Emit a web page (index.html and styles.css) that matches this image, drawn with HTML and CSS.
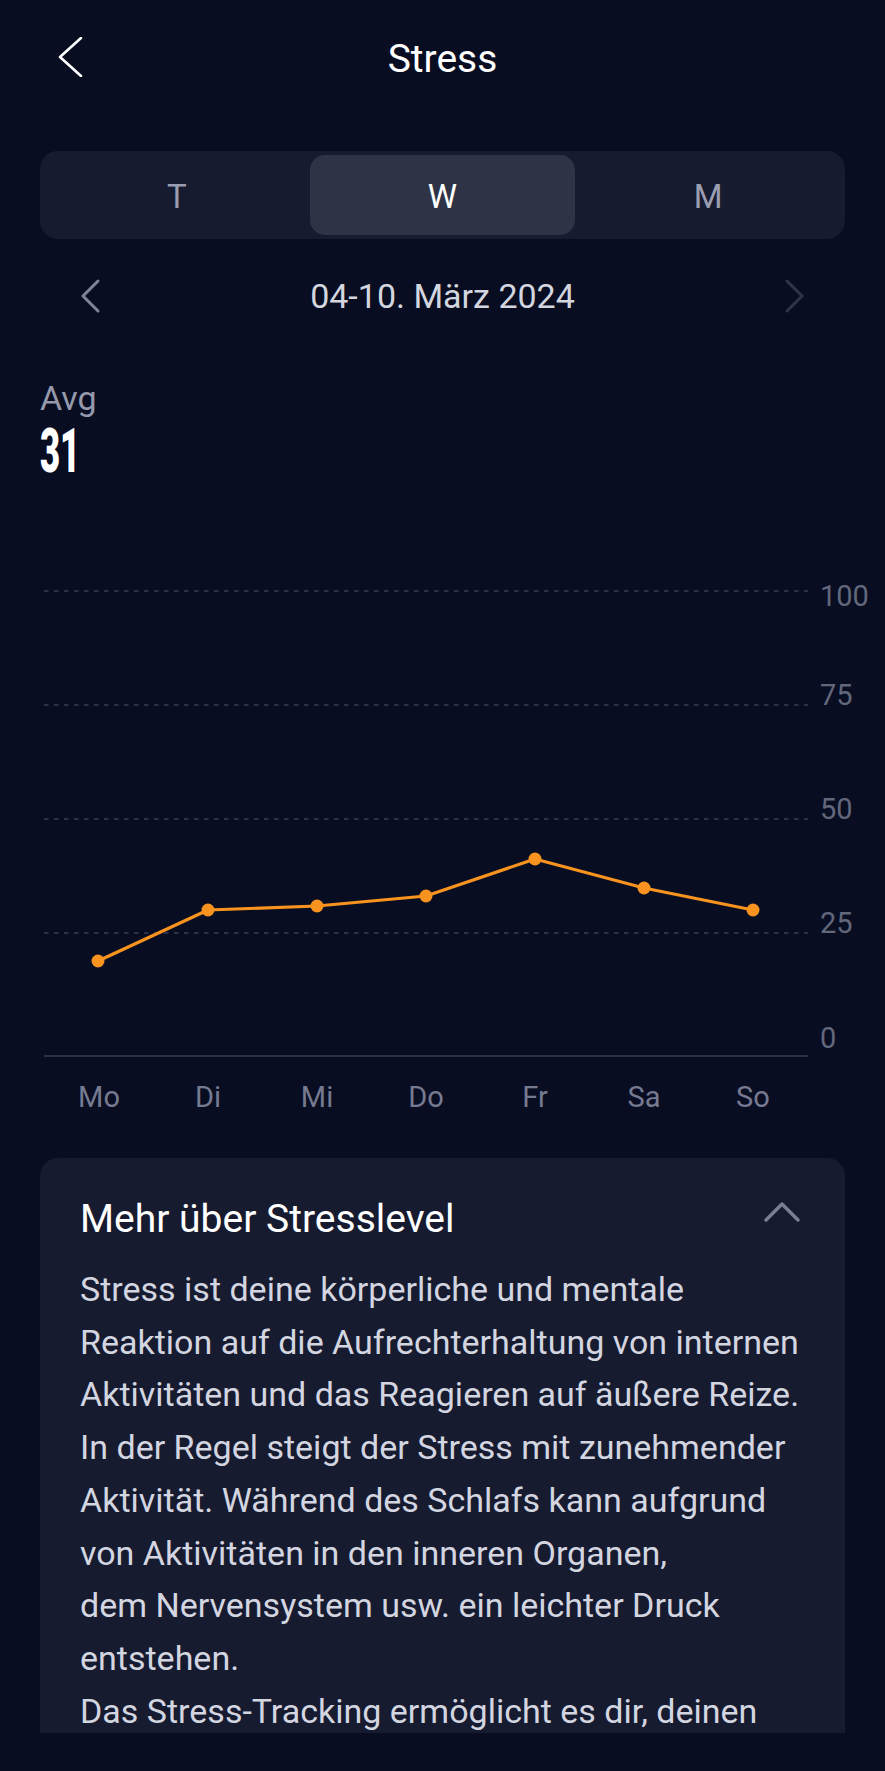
FILE: index.html
```
<!DOCTYPE html>
<html lang="de">
<head>
  <meta charset="UTF-8" />
  <meta name="viewport" content="width=device-width, initial-scale=1.0" />
  <title>Stress</title>
  <link rel="stylesheet" href="styles.css">
</head>
<body>
  <header class="topbar">
    <svg class="back" width="26" height="40" viewBox="0 0 26 40">
      <path d="M23 1 L2 20 L23 39" fill="none" stroke="#fff" stroke-width="2.6" stroke-linecap="round" stroke-linejoin="round"/>
    </svg>
    <h1>Stress</h1>
    <span></span>
  </header>

  <div class="tabs">
    <div class="tab">T</div>
    <div class="tab active">W</div>
    <div class="tab">M</div>
  </div>

  <div class="period">
    <svg width="20" height="34" viewBox="0 0 20 34">
      <path d="M18 2 L3 17 L18 32" fill="none" stroke="#80849a" stroke-width="3" stroke-linecap="round" stroke-linejoin="round"/>
    </svg>
    <span>04-10. März 2024</span>
    <svg width="20" height="34" viewBox="0 0 20 34">
      <path d="M2 2 L17 17 L2 32" fill="none" stroke="#2f3449" stroke-width="3" stroke-linecap="round" stroke-linejoin="round"/>
    </svg>
  </div>

  <div class="avg">
    <div class="avg-label">Avg</div>
    <div class="avg-value"><span>31</span></div>
  </div>

  <svg class="chart" width="885" height="560" viewBox="0 0 885 560">
    <g class="grid">
      <line x1="44" y1="31" x2="808" y2="31"/>
      <line x1="44" y1="145" x2="808" y2="145"/>
      <line x1="44" y1="259" x2="808" y2="259"/>
      <line x1="44" y1="373" x2="808" y2="373"/>
    </g>
    <line class="axis" x1="44" y1="496" x2="808" y2="496"/>
    <g class="ylabels">
      <text x="820" y="46">100</text>
      <text x="820" y="145">75</text>
      <text x="820" y="259">50</text>
      <text x="820" y="373">25</text>
      <text x="820" y="488">0</text>
    </g>
    <polyline class="line" points="98,401 208,350 317,346 426,336 535,299 644,328 753,350"/>
    <g class="dots">
      <circle cx="98" cy="401" r="6.5"/>
      <circle cx="208" cy="350" r="6.5"/>
      <circle cx="317" cy="346" r="6.5"/>
      <circle cx="426" cy="336" r="6.5"/>
      <circle cx="535" cy="299" r="6.5"/>
      <circle cx="644" cy="328" r="6.5"/>
      <circle cx="753" cy="350" r="6.5"/>
    </g>
    <g class="xlabels">
      <text x="99" y="547">Mo</text>
      <text x="208" y="547">Di</text>
      <text x="317" y="547">Mi</text>
      <text x="426" y="547">Do</text>
      <text x="535" y="547">Fr</text>
      <text x="644" y="547">Sa</text>
      <text x="753" y="547">So</text>
    </g>
  </svg>

  <section class="info">
    <div class="info-head">
      <h2>Mehr über Stresslevel</h2>
      <svg width="36" height="22" viewBox="0 0 36 22">
        <path d="M2 19 L18 3 L34 19" fill="none" stroke="#7a7e92" stroke-width="3.4" stroke-linecap="round" stroke-linejoin="round"/>
      </svg>
    </div>
    <p>Stress ist deine körperliche und mentale<br>
    Reaktion auf die Aufrechterhaltung von internen<br>
    Aktivitäten und das Reagieren auf äußere Reize.<br>
    In der Regel steigt der Stress mit zunehmender<br>
    Aktivität. Während des Schlafs kann aufgrund<br>
    von Aktivitäten in den inneren Organen,<br>
    dem Nervensystem usw. ein leichter Druck<br>
    entstehen.<br>
    Das Stress-Tracking ermöglicht es dir, deinen</p>
  </section>
</body>
</html>
```

FILE: styles.css
```
body {
  margin: 0;
  background: #080d22;
  color: #fff;
  font-family: Roboto, "Noto Sans", sans-serif;
  height: 1771px;
  overflow: hidden;
}
.topbar {
  height: 112px;
  display: grid;
  grid-template-columns: 100px 1fr 100px;
  align-items: start;
}
.topbar .back {
  margin: 37px 0 0 58px;
}
.topbar h1 {
  margin: 36px 0 0;
  font-size: 39px;
  font-weight: 400;
  line-height: 46px;
  text-align: center;
}
.tabs {
  margin: 39px 40px 0;
  height: 80px;
  padding: 4px;
  background: #171b2f;
  border-radius: 18px;
  display: grid;
  grid-template-columns: 1fr 1fr 1fr;
}
.tab {
  padding-top: 4px;
  height: 76px;
  line-height: 76px;
  text-align: center;
  font-size: 33px;
  color: #9b9eb1;
  border-radius: 15px;
}
.tab.active {
  background: #2e3346;
  color: #fff;
}
.period {
  height: 114px;
  padding: 0 80px;
  display: flex;
  align-items: center;
  justify-content: space-between;
}
.period span {
  font-size: 34px;
  color: #d3d6df;
}
.avg {
  margin: 25px 0 0 40px;
}
.avg-label {
  font-size: 34px;
  line-height: 40px;
  color: #9599ab;
}
.avg-value {
  margin-top: 3px;
  height: 60px;
  line-height: 60px;
  font-size: 62px;
  font-weight: 900;
}
.avg-value span {
  display: inline-block;
  transform: scaleX(0.56);
  transform-origin: left center;
}
.chart {
  display: block;
  margin-top: 79px;
}
.grid line {
  stroke: #2b3149;
  stroke-width: 2;
  stroke-dasharray: 4.5 5.5;
}
.axis {
  stroke: #2a3046;
  stroke-width: 2;
}
.ylabels text {
  font-size: 29px;
  fill: #62677c;
}
.xlabels text {
  font-size: 29px;
  fill: #767a90;
  text-anchor: middle;
}
.line {
  fill: none;
  stroke: #f7931e;
  stroke-width: 3.2;
  stroke-linejoin: round;
}
.dots circle {
  fill: #f7931e;
}
.info {
  margin: 38px 40px 0;
  height: 537px;
  padding: 38px 40px 0;
  background: #171b2f;
  border-radius: 18px 18px 0 0;
  overflow: hidden;
}
.info-head {
  display: flex;
  justify-content: space-between;
  align-items: flex-start;
}
.info-head h2 {
  margin: 0;
  font-size: 39px;
  font-weight: 400;
  line-height: 46px;
}
.info-head svg {
  margin: 5px 5px 0 0;
}
.info p {
  margin: 21px 0 0;
  font-size: 34px;
  line-height: 52.7px;
  color: #d3d6e0;
  white-space: nowrap;
}
```
